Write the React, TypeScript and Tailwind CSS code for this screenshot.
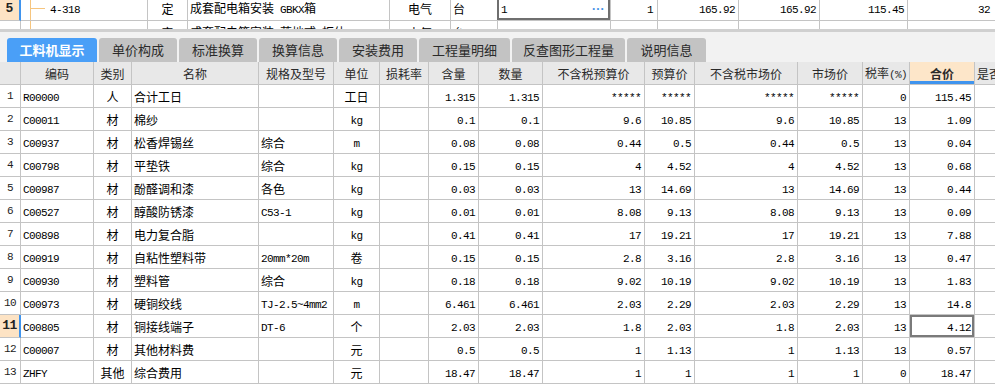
import React from "react";

const ASCII = /^[\x00-\x7F]+$/;

function Tx({ s, bold }: { s: string; bold?: boolean }) {
  const parts = s.split(/([\x00-\x7F]+)/).filter((p) => p.length > 0);
  return (
    <span className={"whitespace-pre " + (bold ? "font-bold" : "")}>
      {parts.map((p, i) =>
        ASCII.test(p) ? (
          <span key={i} className="font-['Liberation_Mono',monospace] text-[11px] tracking-[-0.6px]">
            {p}
          </span>
        ) : (
          <span key={i} className="font-['Noto_Sans_CJK_SC',sans-serif] text-[12px]">
            {p}
          </span>
        )
      )}
    </span>
  );
}

const MAIN_GRID =
  "grid grid-cols-[21px_73px_38px_127px_75px_46px_49px_50px_64px_102px_50px_103px_65px_47px_65px_40px]";
const TOP_GRID = "grid grid-cols-[21px_127px_40px_202px_61px_47px_113px_47px_81px_81px_88px_88px]";

const ALIGN_MAIN = ["c", "l", "c", "l", "l", "c", "l", "r", "r", "r", "r", "r", "r", "r", "r", "l"];

function alignCls(a: string) {
  if (a === "l") return "justify-start pl-[2px]";
  if (a === "r") return "justify-end pr-[3px]";
  return "justify-center";
}

const HEAD = [
  "",
  "编码",
  "类别",
  "名称",
  "规格及型号",
  "单位",
  "损耗率",
  "含量",
  "数量",
  "不含税预算价",
  "预算价",
  "不含税市场价",
  "市场价",
  "税率(%)",
  "合价",
  "是否",
];

const ROWS: string[][] = [
  ["1", "R00000", "人", "合计工日", "", "工日", "", "1.315", "1.315", "*****", "*****", "*****", "*****", "0", "115.45", ""],
  ["2", "C00011", "材", "棉纱", "", "kg", "", "0.1", "0.1", "9.6", "10.85", "9.6", "10.85", "13", "1.09", ""],
  ["3", "C00937", "材", "松香焊锡丝", "综合", "m", "", "0.08", "0.08", "0.44", "0.5", "0.44", "0.5", "13", "0.04", ""],
  ["4", "C00798", "材", "平垫铁", "综合", "kg", "", "0.15", "0.15", "4", "4.52", "4", "4.52", "13", "0.68", ""],
  ["5", "C00987", "材", "酚醛调和漆", "各色", "kg", "", "0.03", "0.03", "13", "14.69", "13", "14.69", "13", "0.44", ""],
  ["6", "C00527", "材", "醇酸防锈漆", "C53-1", "kg", "", "0.01", "0.01", "8.08", "9.13", "8.08", "9.13", "13", "0.09", ""],
  ["7", "C00898", "材", "电力复合脂", "", "kg", "", "0.41", "0.41", "17", "19.21", "17", "19.21", "13", "7.88", ""],
  ["8", "C00919", "材", "自粘性塑料带", "20mm*20m", "卷", "", "0.15", "0.15", "2.8", "3.16", "2.8", "3.16", "13", "0.47", ""],
  ["9", "C00930", "材", "塑料管", "综合", "kg", "", "0.18", "0.18", "9.02", "10.19", "9.02", "10.19", "13", "1.83", ""],
  ["10", "C00973", "材", "硬铜绞线", "TJ-2.5~4mm2", "m", "", "6.461", "6.461", "2.03", "2.29", "2.03", "2.29", "13", "14.8", ""],
  ["11", "C00805", "材", "铜接线端子", "DT-6", "个", "", "2.03", "2.03", "1.8", "2.03", "1.8", "2.03", "13", "4.12", ""],
  ["12", "C00007", "材", "其他材料费", "", "元", "", "0.5", "0.5", "1", "1.13", "1", "1.13", "13", "0.57", ""],
  ["13", "ZHFY", "其他", "综合费用", "", "元", "", "18.47", "18.47", "1", "1", "1", "1", "0", "18.47", ""],
];

const TABS = [
  { t: "工料机显示", w: "w-[90px]", active: true },
  { t: "单价构成", w: "w-[78px]" },
  { t: "标准换算", w: "w-[78px]" },
  { t: "换算信息", w: "w-[78px]" },
  { t: "安装费用", w: "w-[78px]" },
  { t: "工程量明细", w: "w-[91px]" },
  { t: "反查图形工程量", w: "w-[113px]" },
  { t: "说明信息", w: "w-[79px]" },
];

const CELL = "relative flex items-center overflow-hidden whitespace-nowrap leading-[14px] border-r border-b border-[#c4c4c4]";

function TopPanel() {
  const row2 = ["6", "4-317", "定", "成套配电箱安装 落地式 柜体", "电气", "台", "1", "1", "337.83", "775.54", "113", "66.74"];
  return (
    <div className="h-[29px] overflow-hidden bg-white">
      <div className="-mt-[3px]">
        <div className={TOP_GRID + " h-[24px]"}>
          <div className="h-[24px] flex items-center justify-center bg-[#fde3c4] border-r-2 border-[#3f94ee] border-b border-b-[#c4c4c4]">
            <span className="font-['Liberation_Mono',monospace] text-[13px] font-bold text-[#222]">5</span>
          </div>
          <div className={CELL + " h-[24px] pl-[29px]"}>
            <div className="absolute left-[9px] top-0 bottom-0 w-px bg-[#f6c57e]" />
            <div className="absolute left-[9px] top-[11px] w-[15px] h-px bg-[#f6c57e]" />
            <Tx s="4-318" />
          </div>
          <div className={CELL + " h-[24px] justify-center"}>
            <Tx s="定" />
          </div>
          <div className={CELL + " h-[24px] pl-[2px]"}>
            <Tx s="成套配电箱安装 GBKX箱" />
          </div>
          <div className={CELL + " h-[24px] justify-center"}>
            <Tx s="电气" />
          </div>
          <div className={CELL + " h-[24px] pl-[2px]"}>
            <Tx s="台" />
          </div>
          <div className={CELL + " h-[24px] pl-[3px] overflow-visible"}>
            <div className="absolute -left-[1px] top-0 right-0 bottom-0 border-2 border-[#6f6f6f]" />
            <Tx s="1" />
            <span className="absolute right-[5px] top-[6px] text-[#3f8fe6] text-[12px] leading-none tracking-[1px] font-bold">···</span>
          </div>
          <div className={CELL + " h-[24px] justify-end pr-[4px]"}>
            <Tx s="1" />
          </div>
          <div className={CELL + " h-[24px] justify-end pr-[3px]"}>
            <Tx s="165.92" />
          </div>
          <div className={CELL + " h-[24px] justify-end pr-[3px]"}>
            <Tx s="165.92" />
          </div>
          <div className={CELL + " h-[24px] justify-end pr-[3px]"}>
            <Tx s="115.45" />
          </div>
          <div className={CELL + " h-[24px] justify-end pr-[5px]"}>
            <Tx s="32" />
          </div>
        </div>
        <div className={TOP_GRID + " h-[23px]"}>
          {row2.map((v, i) => {
            const al =
              i === 0 || i === 2 || i === 4
                ? "justify-center"
                : i === 1
                ? "pl-[29px]"
                : i === 3 || i === 5 || i === 6
                ? "pl-[2px]"
                : "justify-end pr-[3px]";
            return (
              <div key={i} className={CELL + " h-[23px] " + al}>
                {i === 1 && <div className="absolute left-[9px] top-0 bottom-0 w-px bg-[#f6c57e]" />}
                <Tx s={v} />
              </div>
            );
          })}
        </div>
      </div>
    </div>
  );
}

function Tabs() {
  return (
    <div className="h-[30px] bg-[#f2f2f2] flex items-end gap-[2px] pl-[7px]">
      {TABS.map((t) => (
        <div
          key={t.t}
          className={
            t.w +
            " h-[24px] rounded-t-[3px] flex items-center justify-center font-['Noto_Sans_CJK_SC',sans-serif] text-[13px] " +
            (t.active ? "bg-[#4a9ff7] text-white font-bold" : "bg-[#c3c3c3] text-[#2a2a2a]")
          }
        >
          {t.t}
        </div>
      ))}
    </div>
  );
}

function Header() {
  return (
    <div className={MAIN_GRID + " h-[23px]"}>
      {HEAD.map((h, i) => {
        const isTotal = i === 14;
        return (
          <div
            key={i}
            className={
              CELL +
              " h-[23px] text-[#2a2a2a] " +
              (i === 15 ? "justify-start pl-[2px] " : "justify-center ") +
              (isTotal ? "bg-[#fde6c9]" : "bg-[#e8e8e8]")
            }
          >
            <Tx s={h} bold={isTotal} />
            {isTotal && <div className="absolute left-0 right-0 bottom-0 h-[3px] bg-[#3f94ee]" />}
          </div>
        );
      })}
    </div>
  );
}

function Body() {
  return (
    <div>
      {ROWS.map((r, ri) => {
        const sel = r[0] === "11";
        return (
          <div key={ri} className={MAIN_GRID + " h-[23px]"}>
            {r.map((v, ci) => {
              if (ci === 0) {
                return (
                  <div
                    key={ci}
                    className={
                      "h-[23px] flex items-center justify-center border-b border-[#c4c4c4] " +
                      (sel ? "bg-[#fde3c4] border-r-2 border-r-[#3f94ee]" : "bg-white border-r")
                    }
                  >
                    <span
                      className={
                        "font-['Liberation_Mono',monospace] tracking-[-0.6px] text-[#222] " +
                        (sel ? "text-[13px] font-bold" : "text-[11px]")
                      }
                    >
                      {v}
                    </span>
                  </div>
                );
              }
              const isSel = sel && ci === 14;
              return (
                <div key={ci} className={CELL + " h-[23px] bg-white text-black " + alignCls(ALIGN_MAIN[ci]) + (isSel ? " overflow-visible" : "")}>
                  {isSel && <div className="absolute left-0 top-0 right-0 bottom-0 border-2 border-[#7a7a7a]" />}
                  <Tx s={v} />
                </div>
              );
            })}
          </div>
        );
      })}
    </div>
  );
}

export default function App() {
  return (
    <div className="w-[995px] h-[386px] overflow-hidden bg-white text-black">
      <TopPanel />
      <div className="h-[3px] bg-[#d0d0d0]" />
      <Tabs />
      <Header />
      <Body />
    </div>
  );
}
